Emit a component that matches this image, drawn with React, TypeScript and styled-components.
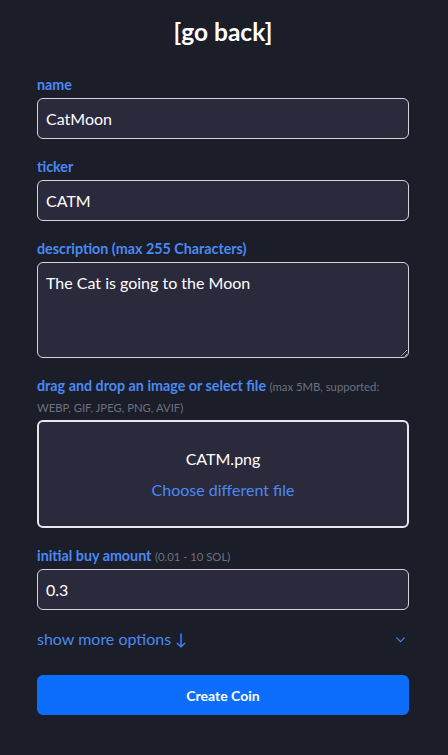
import React from "react";
import styled, {createGlobalStyle} from "styled-components";

const GlobalStyle = createGlobalStyle`
  html, body {
    margin: 0;
    padding: 0;
    background-color: #1b1d28;
  }
  body {
    font-family: Lato, "Noto Sans", "Liberation Sans", sans-serif;
    color: #ffffff;
  }
  * {
    box-sizing: border-box;
  }
`;

const ChevronDown = () => (
  <svg width="13" height="13" viewBox="0 0 24 24" fill="none" stroke="currentColor"
    strokeWidth="2" strokeLinecap="round" strokeLinejoin="round">
    <path d="m5 9 7 7 7-7" />
  </svg>
);

const App = () => {
  return (
    <StyledPage>
      <GlobalStyle />
      <StyledTitle>[go back]</StyledTitle>

      <StyledForm onSubmit={(e) => e.preventDefault()}>
        <StyledField>
          <StyledLabel htmlFor="name">name</StyledLabel>
          <StyledInput id="name" defaultValue="CatMoon" />
        </StyledField>

        <StyledField>
          <StyledLabel htmlFor="ticker">ticker</StyledLabel>
          <StyledInput id="ticker" defaultValue="CATM" />
        </StyledField>

        <StyledField>
          <StyledLabel htmlFor="description">description (max 255 Characters)</StyledLabel>
          <StyledTextArea id="description" defaultValue="The Cat is going to the Moon" />
        </StyledField>

        <StyledField>
          <StyledLabel>
            drag and drop an image or select file{" "}
            <StyledHint>(max 5MB, supported: WEBP, GIF, JPEG, PNG, AVIF)</StyledHint>
          </StyledLabel>
          <StyledDropZone>
            <StyledFileName>CATM.png</StyledFileName>
            <StyledLink type="button">Choose different file</StyledLink>
          </StyledDropZone>
        </StyledField>

        <StyledField>
          <StyledLabel htmlFor="amount">
            initial buy amount <StyledHint>(0.01 - 10 SOL)</StyledHint>
          </StyledLabel>
          <StyledInput id="amount" defaultValue="0.3" />
        </StyledField>

        <StyledMoreRow type="button">
          <span>show more options ↓</span>
          <ChevronDown />
        </StyledMoreRow>

        <StyledSubmit type="submit">Create Coin</StyledSubmit>
      </StyledForm>
    </StyledPage>
  );
};

export default App;

const StyledPage = styled.div`
  display: flex;
  flex-direction: column;
  padding: 16px 39px 40px 37px;
  min-height: 755px;
`;

const StyledTitle = styled.div`
  text-align: center;
  font-size: 24.5px;
  line-height: 32px;
  font-weight: 700;
  color: #ffffff;
  cursor: pointer;
`;

const StyledForm = styled.form`
  display: flex;
  flex-direction: column;
  gap: 17px;
  margin-top: 26px;
`;

const StyledField = styled.div`
  display: flex;
  flex-direction: column;
  gap: 3px;
`;

const StyledLabel = styled.label`
  font-size: 14.3px;
  line-height: 21px;
  font-weight: 700;
  color: #4a89f3;
`;

const StyledHint = styled.span`
  font-size: 11.3px;
  line-height: 1;
  font-weight: 400;
  color: #6b7280;
`;

const StyledInput = styled.input`
  width: 100%;
  height: 41px;
  padding: 0 8px;
  font-family: inherit;
  font-size: 16px;
  color: #ffffff;
  background-color: #2b2a3c;
  border: 1px solid #d1d5db;
  border-radius: 6px;
  outline: none;
`;

const StyledTextArea = styled.textarea`
  width: 100%;
  height: 96px;
  padding: 8px;
  font-family: inherit;
  font-size: 16px;
  line-height: 24px;
  color: #ffffff;
  background-color: #2b2a3c;
  border: 1px solid #d1d5db;
  border-radius: 6px;
  outline: none;
  color-scheme: dark;
`;

const StyledDropZone = styled.div`
  display: flex;
  flex-direction: column;
  align-items: center;
  justify-content: center;
  gap: 7px;
  height: 108px;
  background-color: #2b2a3c;
  border: 2px solid #e5e7eb;
  border-radius: 6px;
`;

const StyledFileName = styled.div`
  font-size: 16px;
  line-height: 24px;
  color: #ffffff;
`;

const StyledLink = styled.button`
  padding: 0;
  background: none;
  border: none;
  font-family: inherit;
  font-size: 16px;
  line-height: 24px;
  color: #4a89f3;
  cursor: pointer;
`;

const StyledMoreRow = styled.button`
  display: flex;
  align-items: center;
  justify-content: space-between;
  width: 100%;
  height: 24px;
  padding: 0 2px 0 0;
  background: none;
  border: none;
  font-family: inherit;
  font-size: 16px;
  line-height: 24px;
  color: #4a89f3;
  cursor: pointer;
`;

const StyledSubmit = styled.button`
  height: 40px;
  margin-top: 7px;
  background-color: #0d6efd;
  border: none;
  border-radius: 6px;
  font-family: inherit;
  font-size: 14px;
  font-weight: 700;
  color: #ffffff;
  cursor: pointer;
`;
